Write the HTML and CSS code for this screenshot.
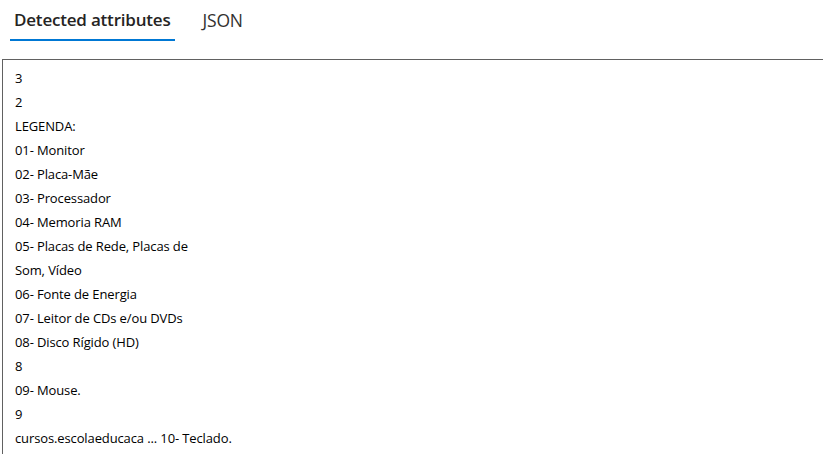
FILE: index.html
```html
<!DOCTYPE html>
<html>
<head>
<meta charset="utf-8">
<link rel="stylesheet" href="styles.css">
</head>
<body>
<div class="tabs">
  <div class="tab active">Detected attributes</div>
  <div class="tab">JSON</div>
</div>
<div class="box">
  <div class="line">3</div>
  <div class="line">2</div>
  <div class="line">LEGENDA:</div>
  <div class="line">01- Monitor</div>
  <div class="line">02- Placa-Mãe</div>
  <div class="line">03- Processador</div>
  <div class="line">04- Memoria RAM</div>
  <div class="line">05- Placas de Rede, Placas de</div>
  <div class="line">Som, Vídeo</div>
  <div class="line">06- Fonte de Energia</div>
  <div class="line">07- Leitor de CDs e/ou DVDs</div>
  <div class="line">08- Disco Rígido (HD)</div>
  <div class="line">8</div>
  <div class="line">09- Mouse.</div>
  <div class="line">9</div>
  <div class="line">cursos.escolaeducaca ... 10- Teclado.</div>
</div>
</body>
</html>
```
FILE: styles.css
```css
html, body {
  margin: 0;
  padding: 0;
  background: #fff;
  overflow: hidden;
}
body {
  height: 454px;
  display: flex;
  flex-direction: column;
  font-family: "Open Sans", "Noto Sans", sans-serif;
  color: #1b1b1b;
}
.tabs {
  display: flex;
  gap: 8px;
  padding-left: 10px;
  height: 41px;
  flex: none;
}
.tab {
  font-size: 17px;
  padding: 8px 4px 0;
  color: #323130;
  box-sizing: border-box;
  height: 41px;
  border-bottom: 2px solid transparent;
  letter-spacing: -0.2px;
}
.tab.active {
  font-weight: 600;
  color: #252423;
  border-bottom-color: #0078d4;
  padding-right: 4px;
}
.tab + .tab {
  padding-left: 20px;
  font-size: 17.5px;
}
.box {
  flex: 1;
  min-height: 0;
  margin-top: 18px;
  margin-left: 2px;
  border-top: 1px solid #616161;
  border-left: 1px solid #616161;
  padding: 6px 0 0 12px;
  font-size: 13px;
  color: #000;
}
.line {
  line-height: 24px;
  letter-spacing: -0.12px;
}
```
